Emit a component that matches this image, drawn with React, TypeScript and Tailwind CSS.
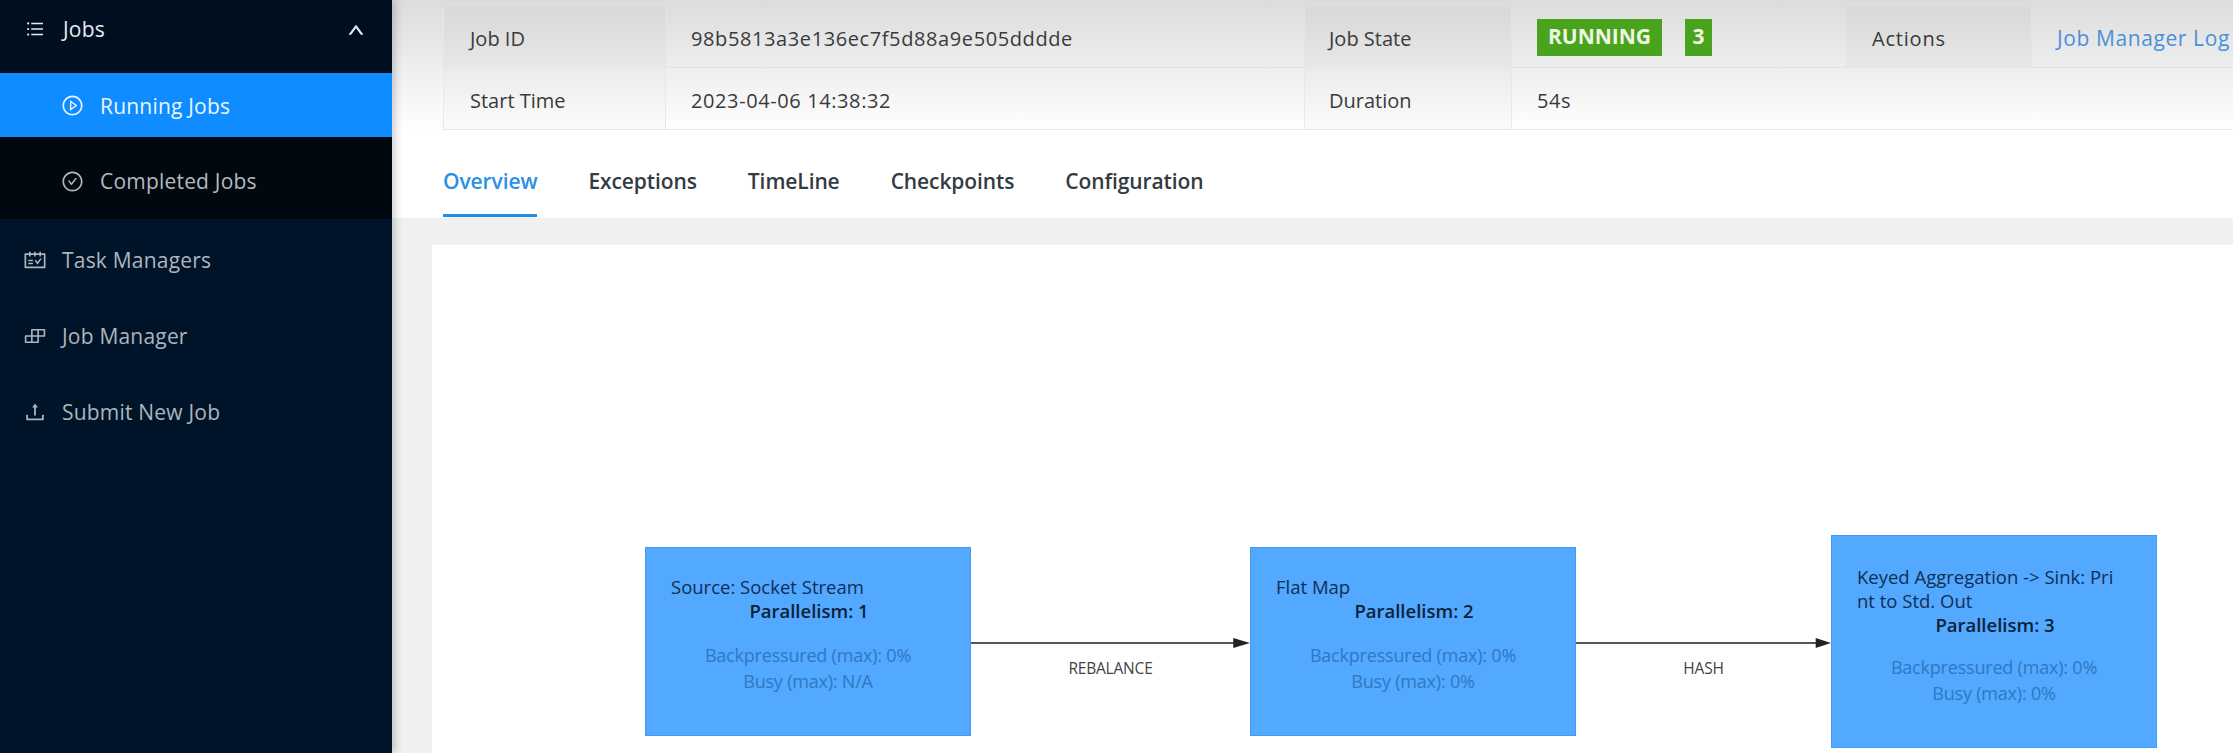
import {
  AiOutlineBuild,
  AiOutlineCheckCircle,
  AiOutlinePlayCircle,
  AiOutlineSchedule,
  AiOutlineUnorderedList,
  AiOutlineUp,
  AiOutlineUpload,
} from 'react-icons/ai';
import type { IconType } from 'react-icons';

const font = 'font-["Open_Sans","Noto_Sans",sans-serif]';

const navItems: { label: string; icon: IconType }[] = [
  { label: 'Task Managers', icon: AiOutlineSchedule },
  { label: 'Job Manager', icon: AiOutlineBuild },
  { label: 'Submit New Job', icon: AiOutlineUpload },
];

const tabs = ['Overview', 'Exceptions', 'TimeLine', 'Checkpoints', 'Configuration'];

type NodeInfo = {
  x: string;
  title: string;
  parallelism: number;
  busy: string;
  tall?: boolean;
};

function Sidebar() {
  return (
    <aside className="relative z-10 w-[392px] shrink-0 bg-[#001429] text-[21px] leading-[28px] tracking-[0.2px] shadow-[3px_0_8px_rgba(0,0,0,0.2)]">
      <div className="flex h-[73px] items-start justify-between bg-[#000f20] pl-[25px] pr-[27px] pt-[15px] text-[#e6ebef]">
        <div className="flex items-center gap-[18px]">
          <AiOutlineUnorderedList className="h-[20px] w-[20px]" />
          <span>Jobs</span>
        </div>
        <AiOutlineUp className="mt-[6px] h-[18px] w-[18px]" stroke="currentColor" strokeWidth={50} />
      </div>
      <div className="flex h-[64px] items-center gap-[16px] bg-[#0f8cff] pl-[61px] pt-[1px] text-[#eaf5ff]">
        <AiOutlinePlayCircle className="h-[23px] w-[23px]" />
        <span>Running Jobs</span>
      </div>
      <div className="flex h-[82px] items-center gap-[16px] bg-[#000810] pl-[61px] pt-[6px] text-[#b6b9ba]">
        <AiOutlineCheckCircle className="h-[23px] w-[23px]" />
        <span>Completed Jobs</span>
      </div>
      <div className="flex flex-col pt-[3px] text-[#adb5bd]">
        {navItems.map(({ label, icon: Icon }) => (
          <div key={label} className="flex h-[76px] items-center gap-[15px] pl-[23px]">
            <Icon className="h-[24px] w-[24px]" />
            <span>{label}</span>
          </div>
        ))}
      </div>
    </aside>
  );
}

function JobTable() {
  const label = 'flex items-center pt-[3px] text-[20px]';
  const value = 'flex items-center pl-[25px] pt-[3px] text-[20px] tracking-[0.6px]';
  return (
    <div className="ml-[51px] grid h-[123px] w-[1790px] grid-cols-[222px_639px_207px_334px_186px_202px] grid-rows-[61px_62px] border-l border-b border-[#e8e8e8] text-[#3a3a3a]">
      <div className={`${label} border-b border-r border-[#e4e4e4] bg-black/[0.025] pl-[26px]`}>Job ID</div>
      <div className={`${value} border-b border-r border-[#e4e4e4]`}>98b5813a3e136ec7f5d88a9e505dddde</div>
      <div className={`${label} border-b border-r border-[#e4e4e4] bg-black/[0.025] pl-[24px]`}>Job State</div>
      <div className={`${value} gap-[23px] border-b border-[#e4e4e4] !pt-0 tracking-normal`}>
        <span className="flex h-[37px] w-[125px] items-center justify-center bg-[#4aa31c] text-[21px] font-bold text-[#eef7e4]">RUNNING</span>
        <span className="flex h-[37px] w-[27px] items-center justify-center bg-[#4aa31c] text-[21px] font-bold text-[#eef7e4]">3</span>
      </div>
      <div className={`${label} border-b border-r border-[#e4e4e4] bg-black/[0.025] pl-[26px] tracking-[0.8px]`}>Actions</div>
      <div className={`${value} border-b border-[#e4e4e4] text-[21px] tracking-[0.3px] text-[#4a90d9]`}>Job Manager Log</div>
      <div className={`${label} border-r border-[#e8e8e8] bg-black/[0.012] pl-[26px]`}>Start Time</div>
      <div className={`${value} border-r border-[#e8e8e8]`}>2023-04-06 14:38:32</div>
      <div className={`${label} border-r border-[#e8e8e8] bg-black/[0.012] pl-[24px]`}>Duration</div>
      <div className={value}>54s</div>
    </div>
  );
}

function Tabs() {
  return (
    <div className="ml-[51px] mt-[27px] flex gap-[51px] text-[21px] font-semibold tracking-[-0.1px] text-[#333b42]">
      {tabs.map((tab, i) => (
        <div
          key={tab}
          className={`h-[60px] pt-[9px] ${i === 0 ? 'border-b-[3px] border-[#1c8fee] text-[#2a90e6]' : ''}`}
        >
          {tab}
        </div>
      ))}
    </div>
  );
}

function GraphNode({ x, title, parallelism, busy, tall }: NodeInfo) {
  return (
    <div
      className={`absolute flex w-[326px] flex-col border border-[#3d9bf5] bg-[#53a8ff] px-[25px] text-[18.5px] leading-[24px] ${
        tall ? 'top-[290px] h-[213px] pt-[29px]' : 'top-[302px] h-[189px] pt-[27px]'
      } ${x}`}
    >
      <div className="break-all pr-[14px] text-[#102f52]">{title}</div>
      <div className="pl-[2px] text-center font-semibold text-[#0c2238]">Parallelism: {parallelism}</div>
      <div className={`text-center text-[18px] tracking-[-0.2px] text-[#2f78c4] ${tall ? 'mt-[18px]' : 'mt-[20px]'}`}>
        Backpressured (max): 0%
      </div>
      <div className="mt-[2px] text-center text-[18px] tracking-[-0.2px] text-[#2f78c4]">Busy (max): {busy}</div>
    </div>
  );
}

function Edge({ x, w, label }: { x: string; w: string; label: string }) {
  return (
    <div className={`absolute top-[393px] flex flex-col items-center ${x} ${w}`}>
      <svg className="h-[10px] w-full" viewBox="0 0 100 10" preserveAspectRatio="none">
        <line x1="0" y1="5" x2="95" y2="5" stroke="#555" strokeWidth="2" vectorEffect="non-scaling-stroke" />
        <polygon points="94,0 100,5 94,10" fill="#222" />
      </svg>
      <span className="mt-[9px] text-[15.5px] tracking-[-0.2px] text-[#444]">{label}</span>
    </div>
  );
}

function Graph() {
  return (
    <div className="relative ml-[40px] h-[508px] overflow-hidden bg-white">
      <GraphNode x="left-[213px]" title="Source: Socket Stream" parallelism={1} busy="N/A" />
      <Edge x="left-[539px]" w="w-[279px]" label="REBALANCE" />
      <GraphNode x="left-[818px]" title="Flat Map" parallelism={2} busy="0%" />
      <Edge x="left-[1144px]" w="w-[255px]" label="HASH" />
      <GraphNode x="left-[1399px]" title="Keyed Aggregation -> Sink: Print to Std. Out" parallelism={3} busy="0%" tall />
    </div>
  );
}

export default function App() {
  return (
    <div className={`flex h-[753px] w-[2233px] overflow-hidden bg-[#f0f0f0] ${font}`}>
      <Sidebar />
      <main className="flex min-w-0 flex-1 flex-col">
        <header className="h-[218px] bg-gradient-to-b from-[#dcdcdc] via-white via-60% to-white pt-[7px]">
          <JobTable />
          <Tabs />
        </header>
        <div className="h-[27px]" />
        <Graph />
      </main>
    </div>
  );
}
